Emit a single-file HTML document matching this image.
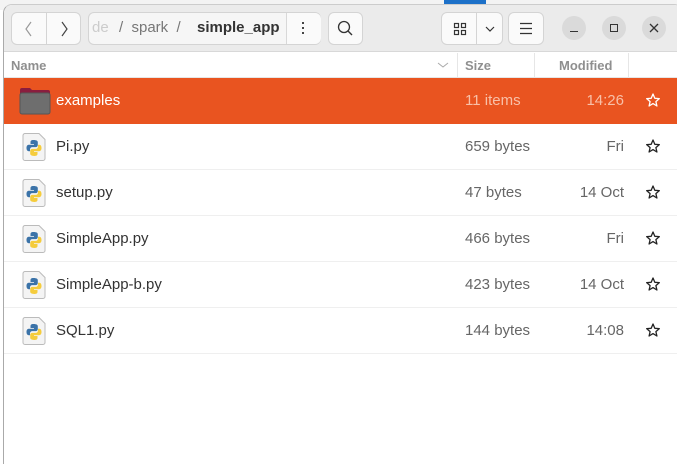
<!DOCTYPE html>
<html><head><meta charset="utf-8"><style>
*{margin:0;padding:0;box-sizing:border-box}
body{width:677px;height:455px;overflow:hidden;background:#fff;font-family:"Liberation Sans","DejaVu Sans",sans-serif;position:relative}
.abs{position:absolute}
.win{position:absolute;left:3px;top:4px;width:680px;height:460px;background:#fff;border-left:1px solid #aaa;border-top:1px solid #ccc;border-radius:9px 9px 0 0;overflow:hidden}
.hb{position:absolute;left:0;top:0;right:0;height:47px;background:#ebebeb;border-bottom:1px solid #d8d8d8}
.btn{position:absolute;background:#fafafa;border:1px solid #d4d4d4;border-radius:6px;height:33px;top:7px}
.circ{position:absolute;width:24px;height:24px;border-radius:12px;background:#dadada;top:11px}
.row{position:absolute;left:0;width:680px;height:46px;border-bottom:1px solid #efefef;font-size:15px;color:#333}
.row span{position:absolute;top:14px}
.nm{left:52px}.sz{left:461px;color:#666}.md{right:60px;color:#666;text-align:right}
.st{position:absolute;left:642px;top:15px}
.ic{position:absolute;left:18px;top:8px}
</style></head><body>
<div class="abs" style="left:0;top:0;width:677px;height:10px;background:#f3f3f3"></div>
<div class="abs" style="left:444px;top:0;width:42px;height:6px;background:#1c70c8"></div>
<svg width="0" height="0" style="position:absolute"><defs>
<g id="py"><path d="M3 1.5h14l6 6v19a2 2 0 0 1-2 2H3a2 2 0 0 1-2-2v-23a2 2 0 0 1 2-2z" fill="#f4f4f4" stroke="#bbb"/>
<path d="M11.5 8c-2.5 0-3 1-3 2.2V12h3.5v.8H7c-1.5 0-2.5 1-2.5 3.2s1 3.2 2.3 3.2h1.2v-1.8c0-1.3 1-2.3 2.3-2.3h3.5c1.1 0 2-.9 2-2v-2.9c0-1.1-1-2.2-4.3-2.2z" fill="#3b73a8"/>
<path d="M12.5 24c2.5 0 3-1 3-2.2V20H12v-.8h5c1.5 0 2.5-1 2.5-3.2s-1-3.2-2.3-3.2H16v1.8c0 1.3-1 2.3-2.3 2.3h-3.5c-1.1 0-2 .9-2 2v2.9c0 1.1 1 2.2 4.3 2.2z" fill="#f5cc3c"/></g>
<path id="star" d="M7 1 L8.8 5.3 L13.3 5.6 L9.9 8.6 L10.9 13 L7 10.6 L3.1 13 L4.1 8.6 L0.7 5.6 L5.2 5.3Z" fill="none" stroke-width="1.3" stroke-linejoin="round"/>
</defs></svg>
<div class="win">
<div class="hb">
 <div class="btn" style="left:7px;width:70px"><div class="abs" style="left:34px;top:0;width:1px;height:31px;background:#d4d4d4"></div>
 <svg class="abs" style="left:0;top:0" width="70" height="31"><path d="M19 9 L14 16 L19 23" stroke="#999" fill="none" stroke-width="1.2"/><path d="M50 9 L55 16 L50 23" stroke="#444" fill="none" stroke-width="1.2"/></svg></div>
 <div class="btn" style="left:84px;width:233px;background:#f6f6f6">
  <div class="abs" style="left:3px;top:6px;font-size:15px;color:#ccc">de</div>
  <div class="abs" style="left:30px;top:6px;font-size:15px;color:#777">/&nbsp;&nbsp;spark&nbsp;&nbsp;/</div>
  <div class="abs" style="left:108px;top:6px;font-size:15px;color:#333;font-weight:bold">simple_app</div>
  <div class="abs" style="left:197px;top:0;width:1px;height:31px;background:#d8d8d8"></div>
  <div class="abs" style="left:198px;top:0;width:34px;height:31px;background:#fafafa;border-radius:0 6px 6px 0"></div>
  <div class="abs" style="left:213px;top:9px;width:2px;height:2px;background:#444;box-shadow:0 5px #444,0 10px #444"></div>
 </div>
 <div class="btn" style="left:324px;width:35px"><svg width="33" height="31"><circle cx="15" cy="14" r="5.5" stroke="#333" fill="none" stroke-width="1.3"/><path d="M19 18 L23 22" stroke="#333" stroke-width="1.4"/></svg></div>
 <div class="btn" style="left:437px;width:62px"><div class="abs" style="left:34px;top:0;width:1px;height:31px;background:#d4d4d4"></div>
 <svg width="62" height="31"><g fill="none" stroke="#333" stroke-width="1.2"><rect x="12.5" y="10.5" width="4" height="4"/><rect x="19.5" y="10.5" width="4" height="4"/><rect x="12.5" y="17.5" width="4" height="4"/><rect x="19.5" y="17.5" width="4" height="4"/><path d="M44 14 L48 18 L52 14"/></g></svg></div>
 <div class="btn" style="left:504px;width:36px"><svg width="34" height="31"><path d="M11 10.5h12M11 15.5h12M11 20.5h12" stroke="#333" stroke-width="1.2"/></svg></div>
 <div class="circ" style="left:558px"><div class="abs" style="left:8px;top:15px;width:8px;height:1.3px;background:#333"></div></div>
 <div class="circ" style="left:598px"><div class="abs" style="left:8px;top:8px;width:8px;height:8px;border:1.3px solid #333"></div></div>
 <div class="circ" style="left:638px"><svg width="24" height="24"><path d="M8 8L16 16M16 8L8 16" stroke="#333" stroke-width="1.3"/></svg></div>
</div>
<div class="abs" style="left:0;top:48px;width:680px;height:25px;border-bottom:1px solid #e6e6e6;font-size:13px;font-weight:bold;color:#8f8f8f">
 <span class="abs" style="left:7px;top:5px">Name</span>
 <svg class="abs" style="left:433px;top:8px" width="12" height="8"><path d="M1 2 L6 6 L11 2" stroke="#aaa" fill="none"/></svg>
 <div class="abs" style="left:453px;top:0;width:1px;height:24px;background:#e6e6e6"></div>
 <span class="abs" style="left:461px;top:5px">Size</span>
 <div class="abs" style="left:530px;top:0;width:1px;height:24px;background:#e6e6e6"></div>
 <span class="abs" style="left:555px;top:5px">Modified</span>
 <div class="abs" style="left:624px;top:0;width:1px;height:24px;background:#e6e6e6"></div>
</div>
<div class="row" style="top:73px;background:#e95420;color:#fff;border:none">
 <svg class="ic" width="34" height="30" style="left:14px;top:8px"><path d="M2 4 Q2 2 4 2 H12 L14 4 H30 Q32 4 32 6 V10 H2Z" fill="#8a1d3e"/><rect x="2" y="7" width="30" height="21" rx="2" fill="#6e6e6e" stroke="#555"/></svg>
 <span class="nm">examples</span><span class="sz" style="color:#f8c0a8">11 items</span><span class="md" style="color:#f8c0a8">14:26</span><svg class="st" width="15" height="15"><use href="#star" stroke="#fff"/></svg>
</div>
<div class="row" style="top:119px"><svg class="ic" width="26" height="30"><use href="#py"/></svg><span class="nm">Pi.py</span><span class="sz">659 bytes</span><span class="md">Fri</span><svg class="st" width="15" height="15"><use href="#star" stroke="#222"/></svg></div>
<div class="row" style="top:165px"><svg class="ic" width="26" height="30"><use href="#py"/></svg><span class="nm">setup.py</span><span class="sz">47 bytes</span><span class="md">14 Oct</span><svg class="st" width="15" height="15"><use href="#star" stroke="#222"/></svg></div>
<div class="row" style="top:211px"><svg class="ic" width="26" height="30"><use href="#py"/></svg><span class="nm">SimpleApp.py</span><span class="sz">466 bytes</span><span class="md">Fri</span><svg class="st" width="15" height="15"><use href="#star" stroke="#222"/></svg></div>
<div class="row" style="top:257px"><svg class="ic" width="26" height="30"><use href="#py"/></svg><span class="nm">SimpleApp-b.py</span><span class="sz">423 bytes</span><span class="md">14 Oct</span><svg class="st" width="15" height="15"><use href="#star" stroke="#222"/></svg></div>
<div class="row" style="top:303px"><svg class="ic" width="26" height="30"><use href="#py"/></svg><span class="nm">SQL1.py</span><span class="sz">144 bytes</span><span class="md">14:08</span><svg class="st" width="15" height="15"><use href="#star" stroke="#222"/></svg></div>
</div>
</body></html>
